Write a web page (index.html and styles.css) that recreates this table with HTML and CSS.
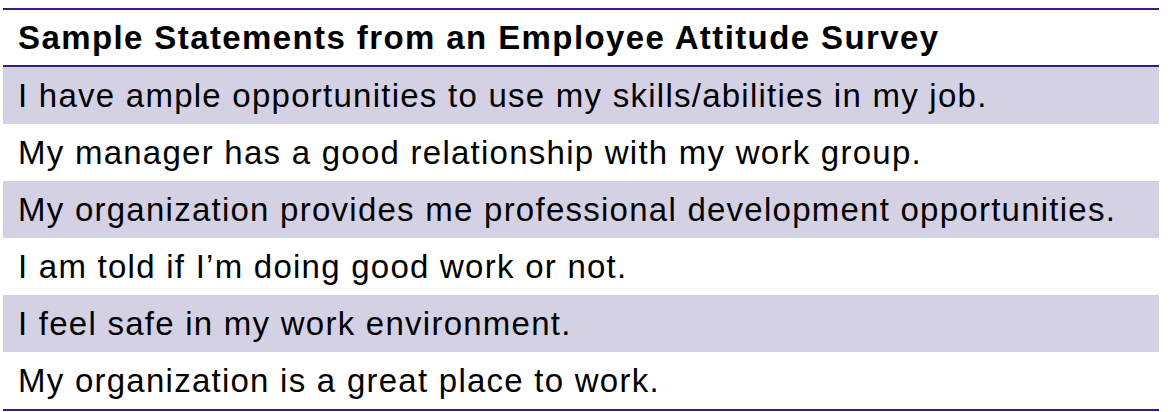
FILE: index.html
```html
<!DOCTYPE html>
<html>
<head>
<meta charset="utf-8">
<link rel="stylesheet" href="styles.css">
</head>
<body>
<div class="survey">
  <div class="survey-head">Sample Statements from an Employee Attitude Survey</div>
  <div class="row shaded">I have ample opportunities to use my skills/abilities in my job.</div>
  <div class="row">My manager has a good relationship with my work group.</div>
  <div class="row shaded">My organization provides me professional development opportunities.</div>
  <div class="row">I am told if I’m doing good work or not.</div>
  <div class="row shaded">I feel safe in my work environment.</div>
  <div class="row">My organization is a great place to work.</div>
</div>
</body>
</html>
```
FILE: styles.css
```css
html, body {
  margin: 0;
  padding: 0;
  background: #ffffff;
}
body {
  padding: 8px 0 0 3px;
  font-family: "Liberation Sans", Arial, sans-serif;
  color: #000000;
}
.survey {
  width: 1156px;
  border-top: 2px solid #3b1c7d;
  border-bottom: 2px solid #3b1c7d;
  display: flex;
  flex-direction: column;
}
.survey-head {
  height: 55px;
  display: flex;
  align-items: center;
  padding-left: 15px;
  font-size: 33px;
  letter-spacing: 1.4px;
  font-weight: bold;
  border-bottom: 2px solid #3b1c7d;
}
.row {
  height: 57px;
  display: flex;
  align-items: center;
  padding-left: 15px;
  font-size: 33px;
  letter-spacing: 1.25px;
}
.shaded {
  background: #d5d1e5;
}
```
